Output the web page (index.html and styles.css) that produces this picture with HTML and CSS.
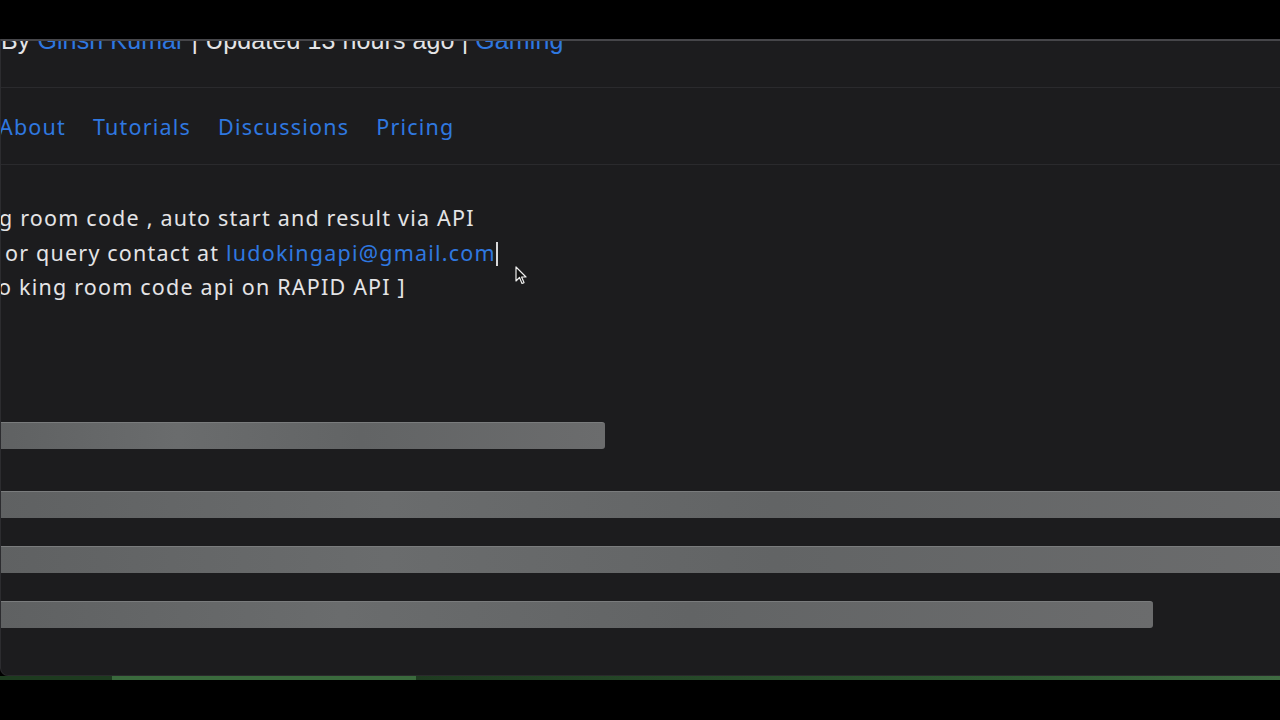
FILE: index.html
```html
<!DOCTYPE html>
<html lang="en">
<head>
	<meta charset="utf-8" />
	<title>Ludo King Room Code API</title>
	<link rel="stylesheet" href="styles.css">
</head>
<body>
	<div class="screen">
		<div class="card">
			<div class="meta">
				<span class="meta-text">By <a href="#">Girish Kumar</a> | Updated 13 hours ago | <a href="#">Gaming</a></span>
			</div>
			<nav class="tabs">
				<a href="#">About</a>
				<a href="#">Tutorials</a>
				<a href="#">Discussions</a>
				<a href="#">Pricing</a>
			</nav>
			<div class="desc">
				<p class="line line-1">g room code , auto start and result via API</p>
				<p class="line line-2">or query contact at <a href="#">ludokingapi@gmail.com</a><span class="caret"></span></p>
				<p class="line line-3">o king room code api on RAPID API ]</p>
			</div>
			<div class="skeleton">
				<div class="bar bar-short"></div>
				<div class="bar bar-full bar-gap"></div>
				<div class="bar bar-full"></div>
				<div class="bar bar-long"></div>
			</div>
		</div>
		<div class="progress">
			<div class="progress-done"></div>
			<div class="progress-buffer"></div>
			<div class="progress-rest"></div>
		</div>
		<svg class="cursor" width="12" height="19" viewBox="0 0 12 19">
			<path d="M1 1 L1 15 L4.5 11.5 L7 17.5 L9 16.6 L6.6 11 L11 11 Z" fill="#111" stroke="#eee" stroke-width="1.2" stroke-linejoin="round" />
		</svg>
	</div>
</body>
</html>
```

FILE: styles.css
```css
body
{
	margin: 0;
	background-color: #000;
	font-family: "Noto Sans", sans-serif;
	color: #e4e4e6;
}

.screen
{
	position: relative;
	width: 1280px;
	height: 720px;
	padding-top: 39px;
	box-sizing: border-box;
	overflow: hidden;
}

.card
{
	height: 637px;
	box-sizing: border-box;
	background-color: #1c1c1e;
	border-top: 2px solid #46464a;
	border-left: 1px solid #2c2c2f;
	border-bottom: 1px solid #2a2a2c;
	border-bottom-left-radius: 8px;
	overflow: hidden;
}

a
{
	color: #2f78e0;
	text-decoration: none;
}

.meta
{
	height: 46px;
	border-bottom: 1px solid #2a2a2d;
	overflow: hidden;
}

	.meta .meta-text
	{
		display: block;
		margin-top: -16px;
		font-family: "Liberation Sans", Arial, sans-serif;
		font-size: 25px;
		line-height: 30px;
		letter-spacing: 0.1px;
		white-space: nowrap;
	}

.tabs
{
	display: flex;
	align-items: center;
	gap: 27px;
	height: 76px;
	border-bottom: 1px solid #2a2a2d;
	margin-left: -2px;
}

	.tabs a
	{
		font-size: 21.5px;
		letter-spacing: 1.2px;
	}

.desc
{
	padding-top: 36px;
}

	.desc .line
	{
		margin: 0;
		font-size: 21.5px;
		letter-spacing: 1.2px;
		line-height: 34.5px;
		white-space: nowrap;
	}

	.desc .line-1
	{
		margin-left: -2px;
	}

	.desc .line-2
	{
		margin-left: 4px;
	}

	.desc .line-3
	{
		margin-left: -3px;
	}

	.desc .caret
	{
		display: inline-block;
		width: 2px;
		height: 24px;
		vertical-align: -5px;
		background-color: #d8d8da;
	}

.skeleton
{
	display: flex;
	flex-direction: column;
	gap: 28px;
	padding-top: 117px;
	margin-left: -6px;
}

	.skeleton .bar
	{
		height: 27px;
		box-sizing: border-box;
		border-radius: 3px;
		border-top: 1px solid #7a7c7d;
		background: linear-gradient(90deg, #5f6162 0%, #6a6c6d 30%, #626465 60%, #6b6c6d 100%);
	}

	.skeleton .bar-short
	{
		width: 610px;
	}

	.skeleton .bar-full
	{
		width: 1300px;
	}

	.skeleton .bar-gap
	{
		margin-top: 14px;
	}

	.skeleton .bar-long
	{
		width: 1158px;
	}

.progress
{
	display: flex;
	height: 4px;
}

	.progress .progress-done
	{
		width: 112px;
		background-color: #1d3a1f;
	}

	.progress .progress-buffer
	{
		width: 304px;
		background-color: #3a6a3d;
	}

	.progress .progress-rest
	{
		flex: 1;
		background: linear-gradient(90deg, #1e3a20, #2f5a33 70%, #3f6b42);
	}

.cursor
{
	position: absolute;
	left: 515px;
	top: 266px;
}
```
